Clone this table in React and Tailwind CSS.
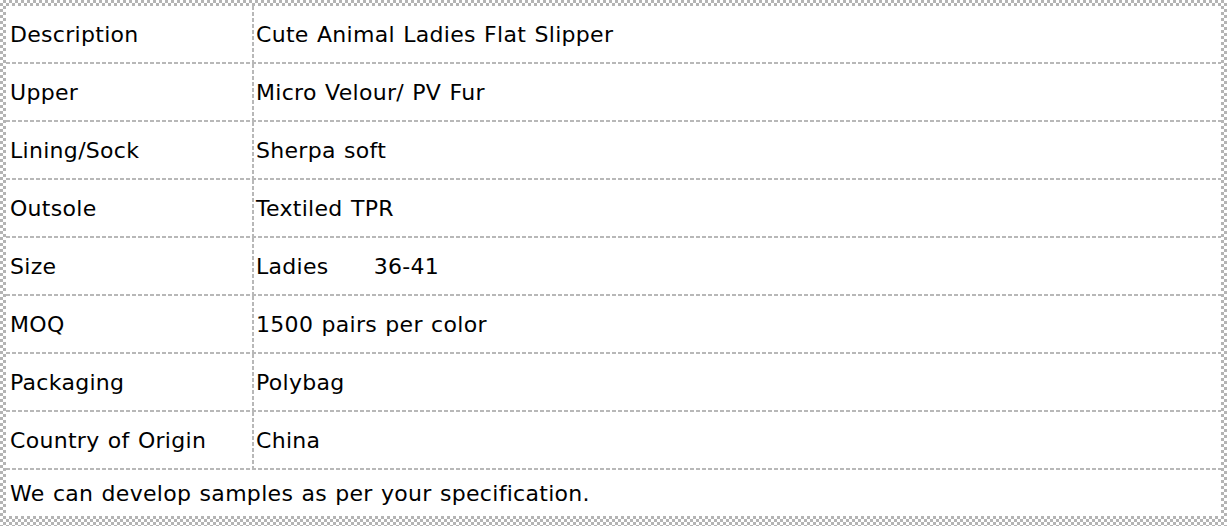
import React from "react";

const specs = [
  { label: "Description", value: "Cute Animal Ladies Flat Slipper" },
  { label: "Upper", value: "Micro Velour/ PV Fur" },
  { label: "Lining/Sock", value: "Sherpa soft" },
  { label: "Outsole", value: "Textiled TPR" },
  { label: "Size", value: "Ladies", extra: "36-41" },
  { label: "MOQ", value: "1500 pairs per color" },
  { label: "Packaging", value: "Polybag" },
  { label: "Country of Origin", value: "China" },
];

// dashed rules drawn as gradients so the dash length matches the sheet
const HRule = () => (
  <div className="h-[2px] bg-[repeating-linear-gradient(90deg,#b8b8b8_0_4px,transparent_4px_6px)]" />
);

const SpecRow = ({ label, value, extra }) => (
  <div className="flex h-[56px]">
    <div className="w-[246px] flex items-center pl-[4px]">{label}</div>
    <div className="w-[2px] bg-[repeating-linear-gradient(180deg,#b8b8b8_0_4px,transparent_4px_6px)]" />
    <div className="flex-1 flex items-center pl-[2px]">
      {value}
      {extra && <span className="ml-[45px]">{extra}</span>}
    </div>
  </div>
);

export default function App() {
  return (
    <div className="w-[1227px] h-[526px] bg-white">
      <div className="h-full pt-[6px] px-[6px] pb-[10px] bg-[repeating-conic-gradient(#b4b4b4_0_25%,#ffffff_0_50%)] bg-[length:6px_6px]">
        <div
          className="h-full bg-white text-black text-[22px] tracking-[0.3px] [word-spacing:1px]"
          style={{ fontFamily: '"DejaVu Sans", sans-serif' }}
        >
          {specs.map((s, i) => (
            <React.Fragment key={s.label}>
              {i > 0 && <HRule />}
              <SpecRow {...s} />
            </React.Fragment>
          ))}
          <HRule />
          <div className="h-[46px] flex items-center pl-[4px]">
            We can develop samples as per your specification.
          </div>
        </div>
      </div>
    </div>
  );
}
